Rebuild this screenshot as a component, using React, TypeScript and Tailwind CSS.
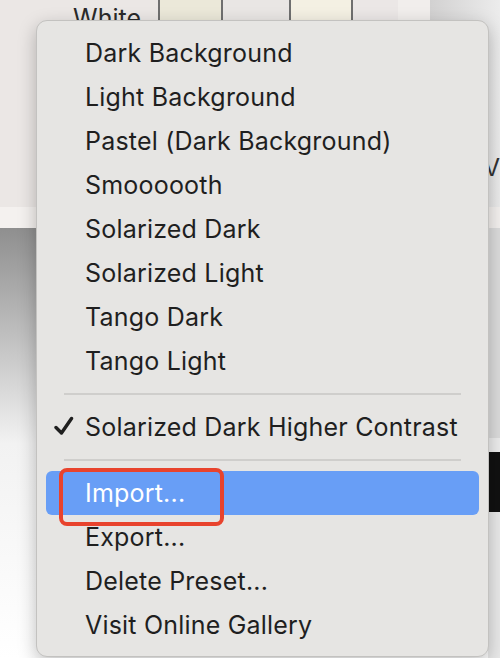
const presets = [
  "Dark Background",
  "Light Background",
  "Pastel (Dark Background)",
  "Smoooooth",
  "Solarized Dark",
  "Solarized Light",
  "Tango Dark",
  "Tango Light",
]

function MenuItem({ label, checked, active }: { label: string; checked?: boolean; active?: boolean }) {
  return (
    <div
      className={`relative flex h-[44px] items-center rounded-[6px] pl-[39px] ${
        active ? "bg-[#689ef6] text-white" : "text-[#1f1f1f]"
      }`}
    >
      {checked && (
        <svg className="absolute left-[8px] top-[11px] h-[20px] w-[20px]" viewBox="0 0 20 20" fill="none">
          <path d="M2 11.5 L7.5 17 L17.5 2.5" stroke="#1f1f1f" strokeWidth={3.4} strokeLinecap="round" strokeLinejoin="round" />
        </svg>
      )}
      <span>{label}</span>
    </div>
  )
}

export default function App() {
  return (
    <div className="relative h-[658px] w-[500px] overflow-hidden bg-[#ebe7e5] font-['Inter','Liberation_Sans',sans-serif]">
      {/* window underneath */}
      <div className="flex h-[207px]">
        <div className="flex-1">
          <div className="flex h-[20px] text-[25px] leading-none text-[#2a2a2a]">
            <div className="w-[158px] pl-[73px] pt-[6px]">White</div>
            <div className="w-[63px] border-l-[2px] border-[#6f6f6f] bg-[#ebe8d9]" />
            <div className="w-[68px] border-l-[2px] border-[#6f6f6f] bg-[#e9e6e4]" />
            <div className="w-[62px] border-l-[2px] border-[#6f6f6f] bg-[#f4f0e3]" />
            <div className="w-[47px] border-l-[2px] border-[#6f6f6f] bg-[#ebe7e6]" />
            <div className="w-[32px] bg-[#f1eeec]" />
          </div>
        </div>
        <div className="w-[70px] bg-gradient-to-r from-[#d2d1d1] to-[#ececec]" />
      </div>
      <div className="h-[21px] bg-[#f4f1ef]" />
      <div className="flex h-[430px]">
        <div className="flex-1 bg-gradient-to-b from-[#8f8f8f] via-[#f2f2f2] to-white" />
        <div className="flex w-[12px] flex-col">
          <div className="h-[210px] bg-[#dcdcdc]" />
          <div className="h-[14px] bg-[#ededed]" />
          <div className="h-[60px] bg-[#111]" />
          <div className="flex-1 bg-[#e9e9e9]" />
        </div>
      </div>
      <span className="absolute right-[0px] top-[150px] text-[24px] text-[#333]">V</span>

      {/* popup menu */}
      <div className="absolute left-[36px] top-[20px] h-[637px] w-[453px] rounded-[11px] border border-[#c3c2c0] bg-[#e6e5e3] px-[9px] pt-[10px] text-[25px] leading-none tracking-[0.2px] shadow-[0_6px_18px_rgba(0,0,0,0.25)]">
        {presets.map((p) => (
          <MenuItem key={p} label={p} />
        ))}
        <div className="mx-[18px] my-[10px] h-[2px] bg-[#cfcecc]" />
        <MenuItem label="Solarized Dark Higher Contrast" checked />
        <div className="mx-[18px] my-[10px] h-[2px] bg-[#cfcecc]" />
        <MenuItem label="Import..." active />
        <MenuItem label="Export..." />
        <MenuItem label="Delete Preset..." />
        <MenuItem label="Visit Online Gallery" />
      </div>

      {/* annotation */}
      <div className="absolute left-[59px] top-[468px] h-[58px] w-[165px] rounded-[8px] border-[4px] border-[#e8432d]" />
    </div>
  )
}
